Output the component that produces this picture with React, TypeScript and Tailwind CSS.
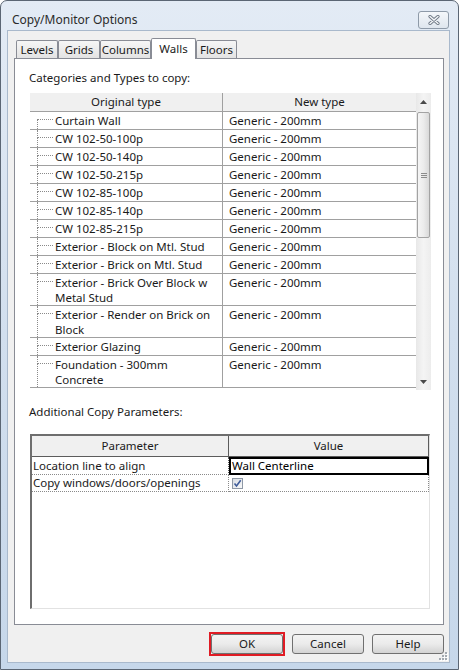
import React from "react";

const typeRows: string[][] = [
  ["Curtain Wall"],
  ["CW 102-50-100p"],
  ["CW 102-50-140p"],
  ["CW 102-50-215p"],
  ["CW 102-85-100p"],
  ["CW 102-85-140p"],
  ["CW 102-85-215p"],
  ["Exterior - Block on Mtl. Stud"],
  ["Exterior - Brick on Mtl. Stud"],
  ["Exterior - Brick Over Block w", "Metal Stud"],
  ["Exterior - Render on Brick on", "Block"],
  ["Exterior Glazing"],
  ["Foundation - 300mm", "Concrete"],
];

const tabs = [
  { label: "Levels", w: "w-[42px]" },
  { label: "Grids", w: "w-[42px]" },
  { label: "Columns", w: "w-[51px]" },
  { label: "Walls", w: "w-[45px]", active: true },
  { label: "Floors", w: "w-[41px]" },
];

const CloseButton = () => (
  <div className="w-[31px] h-[18px] mt-[10px] rounded-[3px] border border-[#8e9aa8] bg-linear-to-b from-[#f4f7fa] to-[#dfe6ee] flex items-center justify-center">
    <svg width="12" height="10" viewBox="0 0 12 10">
      <path d="M2 1.5 L10 8.5 M10 1.5 L2 8.5" stroke="#6d7784" strokeWidth="3.2" strokeLinecap="round" />
      <path d="M2 1.5 L10 8.5 M10 1.5 L2 8.5" stroke="#f4f6f8" strokeWidth="1.5" strokeLinecap="round" />
    </svg>
  </div>
);

const TypeRow = ({ lines, first }: { lines: string[]; first: boolean }) => (
  <div className={`flex border-b border-[#a0a0a0] ${lines.length > 1 ? "h-[32px]" : "h-[18px]"}`}>
    <div className="w-[193px] shrink-0 flex border-r border-[#a0a0a0]">
      <div className="ml-[7px] w-[16px] shrink-0 flex flex-col">
        <div className={`h-[8px] border-b border-dotted border-[#8a8a8a] ${first ? "" : "border-l"}`} />
        <div className="flex-1 border-l border-dotted border-[#8a8a8a]" />
      </div>
      <div className="pl-[2px] pt-[1px] leading-[15px]">
        {lines.map((l) => (
          <div key={l} className="whitespace-nowrap">{l}</div>
        ))}
      </div>
    </div>
    <div className="flex-1 pl-[6px] pt-[1px] leading-[15px] whitespace-nowrap">Generic - 200mm</div>
  </div>
);

const Arrow = ({ down }: { down?: boolean }) => (
  <svg width="7" height="4" viewBox="0 0 7 4">
    <path d={down ? "M0 0 L7 0 L3.5 4 Z" : "M0 4 L7 4 L3.5 0 Z"} fill="#4a4a4a" />
  </svg>
);

const Scrollbar = () => (
  <div className="w-[15px] shrink-0 flex flex-col bg-linear-to-r from-[#e8e8e8] via-[#f4f4f4] to-[#ececec]">
    <div className="h-[17px] flex items-center justify-center">
      <Arrow />
    </div>
    <div className="mt-[2px] mx-px h-[126px] rounded-[2px] border border-[#a3a3a3] bg-linear-to-r from-[#f5f5f5] via-[#ececec] to-[#d9d9d9] flex flex-col items-center justify-center gap-[1px]">
      <div className="w-[6px] h-px bg-[#8c8c8c]" />
      <div className="w-[6px] h-px bg-[#8c8c8c]" />
      <div className="w-[6px] h-px bg-[#8c8c8c]" />
    </div>
    <div className="flex-1" />
    <div className="h-[17px] flex items-center justify-center">
      <Arrow down />
    </div>
  </div>
);

const TypesTable = () => (
  <div className="ml-[1px] w-[401px] h-[297px] flex bg-white">
    <div className="flex-1 flex flex-col">
      <div className="h-[19px] flex bg-[#f0f0f0] border-b border-[#a0a0a0] leading-[18px]">
        <div className="w-[193px] shrink-0 text-center border-r border-[#a0a0a0]">Original type</div>
        <div className="flex-1 text-center">New type</div>
      </div>
      {typeRows.map((r, i) => (
        <TypeRow key={r.join()} lines={r} first={i === 0} />
      ))}
    </div>
    <Scrollbar />
  </div>
);

const Checkbox = () => (
  <svg width="11" height="11" viewBox="0 0 11 11">
    <defs>
      <linearGradient id="cb" x1="0" y1="0" x2="1" y2="1">
        <stop offset="0" stopColor="#d6dbe2" />
        <stop offset="1" stopColor="#fbfbfb" />
      </linearGradient>
    </defs>
    <rect x="0.5" y="0.5" width="10" height="10" fill="url(#cb)" stroke="#8e98a6" />
    <path d="M2.5 5.5 L4.5 8 L8.7 2.3" fill="none" stroke="#3f5c9a" strokeWidth="1.6" />
  </svg>
);

const ParamsTable = () => (
  <div className="ml-[1px] w-[400px] flex-1 flex flex-col bg-white border-t-2 border-l-2 border-[#6e6e6e] border-r border-b border-r-[#e2e2e2] border-b-[#e2e2e2]">
    <div className="h-[21px] flex bg-[#f0f0f0] border-b border-[#5c5c5c] leading-[20px]">
      <div className="w-[197px] shrink-0 text-center border-r border-[#5c5c5c]">Parameter</div>
      <div className="flex-1 text-center border-r border-[#5c5c5c]">Value</div>
    </div>
    <div className="h-[18px] flex">
      <div className="w-[197px] shrink-0 pl-[1px] leading-[17px] border-r border-[#5c5c5c] border-b border-b-[#8a8a8a] border-dotted">
        Location line to align
      </div>
      <div className="flex-1 border-2 border-black pl-[1px] leading-[13px] text-black">Wall Centerline</div>
    </div>
    <div className="h-[17px] flex">
      <div className="w-[197px] shrink-0 pl-[1px] leading-[16px] border-r border-b border-dotted border-[#8a8a8a]">
        Copy windows/doors/openings
      </div>
      <div className="flex-1 pl-[3px] pt-[3px] border-r border-b border-dotted border-[#8a8a8a]">
        <Checkbox />
      </div>
    </div>
  </div>
);

const Button = ({ label }: { label: string }) => (
  <div className="w-[72px] h-[20px] rounded-[3px] border border-[#707070] bg-linear-to-b from-[#f3f3f3] via-[#ebebeb] to-[#d3d3d3] flex items-center justify-center leading-none">
    {label}
  </div>
);

const Grip = () => (
  <svg width="10" height="10" viewBox="0 0 10 10">
    {[
      [7, 1],
      [4, 4],
      [7, 4],
      [1, 7],
      [4, 7],
      [7, 7],
    ].map(([x, y]) => (
      <g key={`${x}-${y}`}>
        <rect x={x + 1} y={y + 1} width="2" height="2" fill="#ffffff" />
        <rect x={x} y={y} width="2" height="2" fill="#a3a9b0" />
      </g>
    ))}
  </svg>
);

export default function App() {
  return (
    <div className="w-[459px] h-[670px] flex flex-col border border-[#5b6674] rounded-t-[7px] bg-linear-to-b from-[#e3ebf5] via-[#d2dfee] to-[#c6d7ea] pl-[7px] pr-[9px] pb-[7px] font-['Noto_Sans',sans-serif] text-[11.5px] text-[#1a1a1a] overflow-hidden">
      <div className="h-[30px] shrink-0 flex justify-between items-start">
        <div className="ml-[4px] mt-[11px] leading-[16px] text-[12px] text-[#2b2b2b]">Copy/Monitor Options</div>
        <CloseButton />
      </div>

      <div className="flex-1 flex flex-col bg-[#f0f0f0] shadow-[0_0_0_1px_#a9b9cc] pt-[7px] relative">
        <div className="h-[20px] ml-[8px] flex items-end">
          {tabs.map((t) =>
            t.active ? (
              <div
                key={t.label}
                className={`${t.w} h-[21px] -mb-px relative z-10 bg-white border border-b-0 border-[#898c95] rounded-t-[2px] text-center leading-[19px]`}
              >
                {t.label}
              </div>
            ) : (
              <div
                key={t.label}
                className={`${t.w} h-[18px] bg-linear-to-b from-[#f6f6f6] to-[#e3e3e3] border border-b-0 border-[#898c95] rounded-t-[2px] text-center leading-[17px]`}
              >
                {t.label}
              </div>
            )
          )}
        </div>

        <div className="ml-[6px] w-[430px] h-[567px] border border-[#898c95] bg-white flex flex-col pt-[11px] pl-[14px] pr-[11px] pb-[15px]">
          <div className="h-[16px] leading-[16px]">Categories and Types to copy:</div>
          <div className="mt-[7px]">
            <TypesTable />
          </div>
          <div className="mt-[14px] h-[16px] leading-[16px]">Additional Copy Parameters:</div>
          <div className="mt-[14px] flex-1 flex flex-col">
            <ParamsTable />
          </div>
        </div>

        <div className="mt-[7px] pr-[5px] flex justify-end items-center">
          <div className="w-[76px] h-[24px] border-2 border-[#e01b24] flex">
            <Button label="OK" />
          </div>
          <div className="ml-[7px]">
            <Button label="Cancel" />
          </div>
          <div className="ml-[8px]">
            <Button label="Help" />
          </div>
        </div>

        <div className="absolute right-[1px] bottom-[1px]">
          <Grip />
        </div>
      </div>
    </div>
  );
}
